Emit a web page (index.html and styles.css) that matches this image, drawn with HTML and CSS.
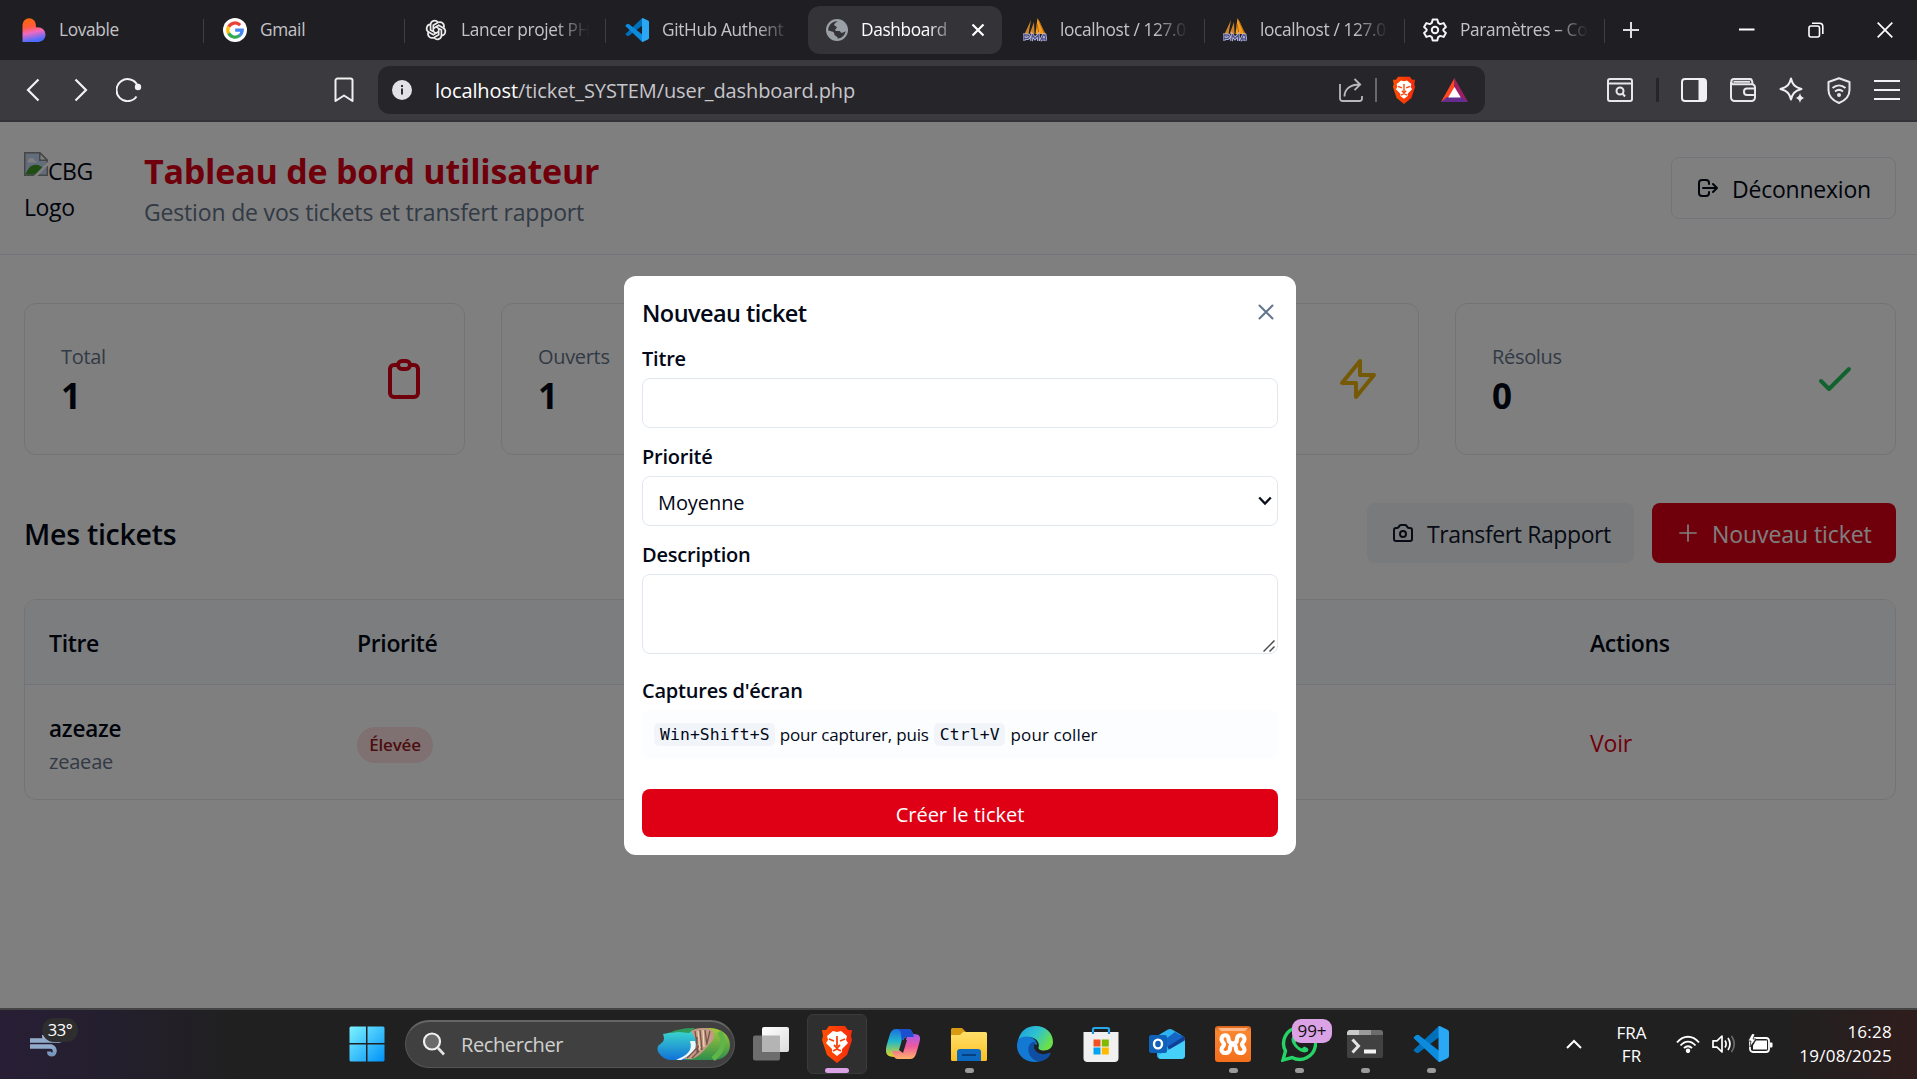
FILE: index.html
```html
<!DOCTYPE html>
<html lang="fr">
<head>
<meta charset="utf-8">
<title>Dashboard</title>
<link rel="stylesheet" href="styles.css">
</head>
<body>
<svg width="0" height="0" class="defs" aria-hidden="true">
  <defs>
    <linearGradient id="lov" x1="0" y1="0" x2="0.2" y2="1"><stop offset="0" stop-color="#ff6a00"/><stop offset=".4" stop-color="#ff5a3c"/><stop offset=".65" stop-color="#f06ac0"/><stop offset="1" stop-color="#4b6cff"/></linearGradient>
    <linearGradient id="win" x1="0" y1="0" x2="1" y2="1"><stop offset="0" stop-color="#7df3ff"/><stop offset="1" stop-color="#0091f8"/></linearGradient>
    <linearGradient id="brv" x1="0" y1="0" x2="1" y2="0"><stop offset="0" stop-color="#ff5000"/><stop offset="1" stop-color="#f62a0c"/></linearGradient>
    <linearGradient id="cpa" x1="0" y1="0" x2="0" y2="1"><stop offset="0" stop-color="#1b6fe0"/><stop offset=".45" stop-color="#23b9c8"/><stop offset="1" stop-color="#e8d51e"/></linearGradient>
    <linearGradient id="cpb" x1="0" y1="0" x2="0" y2="1"><stop offset="0" stop-color="#a45cf0"/><stop offset=".5" stop-color="#ee5a9c"/><stop offset="1" stop-color="#ffb26b"/></linearGradient>
    <linearGradient id="fol" x1="0" y1="0" x2="0" y2="1"><stop offset="0" stop-color="#ffe06a"/><stop offset="1" stop-color="#fdbf22"/></linearGradient>
    <linearGradient id="edg" x1="0" y1="0" x2="1" y2=".5"><stop offset="0" stop-color="#1c9be0"/><stop offset=".55" stop-color="#2fc3cf"/><stop offset="1" stop-color="#6be04a"/></linearGradient>
    <linearGradient id="xmp" x1="0" y1="0" x2="0" y2="1"><stop offset="0" stop-color="#d8611a"/><stop offset=".15" stop-color="#fb8630"/><stop offset="1" stop-color="#f36f1c"/></linearGradient>
    <linearGradient id="tvw" x1="0" y1="0" x2="1" y2="1"><stop offset="0" stop-color="#fff"/><stop offset="1" stop-color="#dcdcdc"/></linearGradient>
    <linearGradient id="wnd" x1="0" y1="0" x2="0" y2="1"><stop offset="0" stop-color="#b4c8e2"/><stop offset="1" stop-color="#7696be"/></linearGradient>
    <linearGradient id="sea" x1="0" y1="0" x2="0" y2="1"><stop offset="0" stop-color="#3ad6cc"/><stop offset="1" stop-color="#1272d8"/></linearGradient>
    <linearGradient id="hil" x1="0" y1="0" x2="0" y2="1"><stop offset="0" stop-color="#a9c93a"/><stop offset="1" stop-color="#2f8f4c"/></linearGradient>
    <symbol id="brave" viewBox="0 0 32 38">
      <path d="M8 1h16l3 4 4 0-1 6 1 4-5 15-10 8L6 30 1 15l1-4-1-6h4z" fill="url(#brv)"/>
      <path d="M16 7l4-1 6 5-1 4 2 3-6 6 0 3-5 4-5-4 0-3-6-6 2-3-1-4 6-5z" fill="#fff"/>
      <path d="M8 14l5 2M24 14l-5 2M16 11v10M13 20l3 3 3-3M12 26l4-2 4 2" fill="none" stroke="#f8420a" stroke-width="1.8"/>
    </symbol>
    <symbol id="vscode" viewBox="0 0 36 36">
      <path d="M1 23.500L25 .8l2 .2v9.500L6 26.500q-1.500 1-3 0l-1.800-1.200q-1-.8-.2-1.800z" fill="#0070ba"/>
      <path d="M1 12.500q-.8-1 .2-1.800L3 9.300q1.500-1 3 0l21 16.200V35l-2 .2z" fill="#0d8bdc"/>
      <path d="M25.500 .3q.8-.5 1.800 0L34.500 3.800Q36 4.500 36 6v24q0 1.500-1.500 2.200l-7.200 3.500q-1 .5-1.800 0z" fill="#2aa7f5"/>
    </symbol>
    <symbol id="pma" viewBox="0 0 24 24">
      <path d="M8 2L1.500 16h4zM11 4L6.500 16h5z" fill="#c9832b"/>
      <path d="M14.500 0l-2 16h10z" fill="#f89c1c"/>
      <path d="M16 3l5 12M14 6l2 10" stroke="#b06a14" fill="none"/>
      <path d="M1 23v-6h3.500c2.500 0 2.300 3.500-.5 3.500H1.500M8.500 23l.8-6 2.700 3.500 3.200-3.500.3 6M17.500 23l2.700-6H22l1 6M18.500 21h4" fill="none" stroke="#c4c6e4" stroke-width="2.800"/>
      <path d="M1 23v-6h3.500c2.500 0 2.300 3.500-.5 3.500H1.500M8.500 23l.8-6 2.700 3.500 3.200-3.500.3 6M17.500 23l2.700-6H22l1 6M18.500 21h4" fill="none" stroke="#4a4d86" stroke-width="1.300"/>
    </symbol>
  </defs>
</svg>

<div class="tabs">
  <div class="tab"><svg width="24" height="24" viewBox="0 0 24 24"><path d="M.5 24V7a6.700 6.700 0 0 1 13.400 0v2.300c5.800-.8 9.600 2.800 9.600 7.300 0 4.400-3.200 7.400-7.500 7.400z" fill="url(#lov)"/></svg><span class="t">Lovable</span></div>
  <div class="tab"><svg width="24" height="24" viewBox="0 0 24 24"><circle cx="12" cy="12" r="12" fill="#fff"/><g fill="none" stroke-width="3.200"><path d="M17.200 7.200A7.200 7.200 0 0 0 5.700 8.700" stroke="#ea4335"/><path d="M5.700 8.500a7.200 7.200 0 0 0 0 7" stroke="#fbbc05"/><path d="M5.700 15.300a7.200 7.200 0 0 0 10.800 2.300" stroke="#34a853"/><path d="M12.200 12.200h7A7.200 7.200 0 0 1 16.300 17.700" stroke="#4285f4"/></g></svg><span class="t">Gmail</span></div>
  <div class="tab"><svg width="24" height="24" viewBox="0 0 24 24" fill="none" stroke="#ececec" stroke-width="1.700"><path id="p1" d="M9.300 13.600V7.300l4.600-2.700a4.100 4.100 0 0 1 5.700 5.300"/><use href="#p1" transform="rotate(60 12 12)"/><use href="#p1" transform="rotate(120 12 12)"/><use href="#p1" transform="rotate(180 12 12)"/><use href="#p1" transform="rotate(240 12 12)"/><use href="#p1" transform="rotate(300 12 12)"/></svg><span class="t fade">Lancer projet PH</span></div>
  <div class="tab nosep"><svg width="24" height="24"><use href="#vscode"/></svg><span class="t fade">GitHub Authent</span></div>
  <div class="tab active"><svg width="22" height="22" viewBox="0 0 22 22"><circle cx="11" cy="11" r="11" fill="#9aa0a6"/><path d="M11.500 2.200c-1.200 1.600-3.500 1.800-3.300 3.700.1 1.400 2.300.8 2.500 2.300.2 1.600-1.800 1.500-1.500 3 .2 1 2.300.7 4 .9 1.600.2 1.300 2.200 3 1.700 1.600-.4 2.300-.6 3.300-1.700-.3 4.200-3.700 7.300-8 7.600.6-1.500-.5-2.300-1.700-2.700-2-.7-1-2.800-2.500-3.900C5.800 12.200 4 12 2.200 11.500c-.2-5 4-9.600 9.300-9.300z" fill="#343338"/><path d="M12 2.500l4.500 2.200 2 3.300-2.800 1.500-2.500-1.300z" fill="#9aa0a6"/></svg><span class="t fade">Dashboard</span><svg class="x" width="14" height="14" viewBox="0 0 14 14"><path d="M1.500 1.500l11 11M12.500 1.500l-11 11" stroke="#fff" stroke-width="2.200"/></svg></div>
  <div class="tab"><svg width="24" height="24"><use href="#pma"/></svg><span class="t fade">localhost / 127.0</span></div>
  <div class="tab"><svg width="24" height="24"><use href="#pma"/></svg><span class="t fade">localhost / 127.0</span></div>
  <div class="tab"><svg width="24" height="24" viewBox="0 0 24 24" fill="none" stroke="#f4f4f6" stroke-width="2" stroke-linejoin="round"><path d="M9.700 1.500h4.600l.9 3.400 2 1.200 3.400-1L22.900 9l-2.500 2.400v1.200L22.900 15l-2.300 3.900-3.400-1-2 1.200-.9 3.400H9.700l-.9-3.400-2-1.200-3.400 1L1.100 15l2.500-2.400v-1.200L1.100 9l2.300-3.900 3.400 1 2-1.200z"/><circle cx="12" cy="12" r="3.200"/></svg><span class="t fade">Paramètres – Co</span></div>
  <svg class="plus" width="16" height="16" viewBox="0 0 16 16"><path d="M8 0v16M0 8h16" stroke="#dedee2" stroke-width="2"/></svg>
  <div class="winctl">
    <svg width="16" height="16" viewBox="0 0 16 16"><path d="M0 7.500h15.500" stroke="#fff" stroke-width="2"/></svg>
    <svg width="16" height="16" viewBox="0 0 16 16" fill="none" stroke="#fff" stroke-width="1.600"><rect x="1" y="4" width="10.500" height="11" rx="2"/><path d="M4 1.200h7.500a3.300 3.300 0 0 1 3.300 3.300V12"/></svg>
    <svg width="16" height="16" viewBox="0 0 16 16"><path d="M.7.700l14.600 14.600M15.300.7L.7 15.300" stroke="#fff" stroke-width="1.700"/></svg>
  </div>
</div>

<div class="toolbar">
  <div class="nav">
    <svg width="14" height="24" viewBox="0 0 14 24"><path d="M12.500 1.500L2 12l10.500 10.500" fill="none" stroke="#f2f2f4" stroke-width="2.200"/></svg>
    <svg width="14" height="24" viewBox="0 0 14 24"><path d="M1.500 1.500L12 12 1.500 22.500" fill="none" stroke="#f2f2f4" stroke-width="2.200"/></svg>
    <svg width="26" height="24" viewBox="0 0 26 24"><path d="M21.500 7.500A11 11 0 1 0 20.500 18.500" fill="none" stroke="#f2f2f4" stroke-width="2"/><circle cx="22" cy="9" r="3.200" fill="#f2f2f4"/></svg>
  </div>
  <svg class="bm" width="20" height="26" viewBox="0 0 20 26"><path d="M1.500 24V3.500a2 2 0 0 1 2-2h13a2 2 0 0 1 2 2V24L10 18.500z" fill="none" stroke="#f0f0f2" stroke-width="2" stroke-linejoin="round"/></svg>
  <div class="url">
    <svg width="20" height="20" viewBox="0 0 20 20"><circle cx="10" cy="10" r="10" fill="#e1e1e6"/><path d="M10 8.500v6M10 5v2" stroke="#26252a" stroke-width="1.900"/></svg>
    <span class="addr"><b>localhost</b>/ticket_SYSTEM/user_dashboard.php</span>
    <svg class="share" width="24" height="24" viewBox="0 0 24 24" fill="none" stroke="#b8b8be" stroke-width="1.800"><path d="M1 6v14.500A2.500 2.500 0 0 0 3.500 23h17a2.500 2.500 0 0 0 2.500-2.500V18"/><path d="M5.500 18.500C5.500 11 11 6.500 21 6.500M15.500 1l5.700 5.500-5.700 5.700"/></svg>
    <i></i>
    <svg class="bv" width="24" height="28"><use href="#brave"/></svg>
    <svg width="27" height="24" viewBox="0 0 27 24"><path d="M13.500 0L0 24l13.500-8z" fill="#ff4724"/><path d="M13.500 0L27 24l-13.500-8z" fill="#9e1f63"/><path d="M0 24h27l-6-5H6z" fill="#662d91"/><path d="M13.500 9l6.300 10.500H7.200z" fill="#fff"/></svg>
  </div>
  <div class="tools">
    <svg width="26" height="24" viewBox="0 0 26 24" fill="none" stroke="#e8e8ec" stroke-width="2"><rect x="1" y="1" width="24" height="22" rx="2"/><path d="M1 5.500h24"/><circle cx="13" cy="13" r="3.500"/><path d="M15.500 15.500l2.500 3"/></svg>
    <i></i>
    <svg width="26" height="24" viewBox="0 0 26 24"><rect x="1" y="1" width="24" height="22" rx="3" fill="none" stroke="#f0f0f3" stroke-width="2"/><path d="M17.500 1H23a2 2 0 0 1 2 2v18a2 2 0 0 1-2 2h-5.500z" fill="#f0f0f3"/></svg>
    <svg width="26" height="24" viewBox="0 0 26 24" fill="none" stroke="#e8e8ec" stroke-width="2"><path d="M1 4v15.500A3.500 3.500 0 0 0 4.500 23h17a3.500 3.500 0 0 0 3.500-3.500V9.300a3 3 0 0 0-3-3H4A2.600 2.600 0 0 1 4 1h16.500q2 1 2 5.300M25 10.500h-8a3 3 0 0 0-3 3v.5a3 3 0 0 0 3 3h8M3.500 3.700H20"/></svg>
    <svg width="26" height="26" viewBox="0 0 26 26"><path d="M12 1.500c1.500 6 3.500 8.500 10.500 10.500-7 2-9 4.500-10.500 10.500C10.500 16.500 8.500 14 1.500 12 8.500 10 10.500 7.500 12 1.500z" fill="none" stroke="#f0f0f3" stroke-width="2" stroke-linejoin="round"/><path d="M21 16c.8 3.200 1.600 4 4.500 5-2.900.9-3.700 1.800-4.500 5-.8-3.200-1.600-4.100-4.500-5 2.900-1 3.700-1.800 4.500-5z" fill="#f0f0f3"/></svg>
    <svg width="24" height="27" viewBox="0 0 24 27" fill="none" stroke="#e8e8ec" stroke-width="2"><path d="M12 1.200L22.500 5v8c0 6-4 10.500-10.500 13C5.500 23.500 1.500 19 1.500 13V5z" stroke-linejoin="round"/><path d="M5.500 11c4-3.500 9-3.500 13 0M8 14.500c2.500-2 5.500-2 8 0"/><circle cx="12" cy="18" r="1" fill="#e8e8ec"/></svg>
    <svg width="26" height="22" viewBox="0 0 26 22"><path d="M0 2h26M0 11h26M0 20h26" stroke="#f2f2f4" stroke-width="2"/></svg>
  </div>
</div>

<div class="page">
  <header>
    <div class="logo"><svg width="24" height="24" viewBox="0 0 16 16"><path d="M.5.500h10l5 5v10H.5z" fill="#c4d8f6" stroke="#8d8d8d"/><path d="M10.500.500v5h5z" fill="#fff" stroke="#8d8d8d"/><path d="M2.500 6.500c0-1.600 1.200-2.500 2.500-2.500s2 .9 2 1.800c1.200 0 1.500.7 1.500 1.200h-6z" fill="#fff"/><path d="M1 15c1.500-4.500 4-6.500 7-6.500 2 0 3.500 1 4.500 2L8 15z" fill="#3f9b26"/><path d="M16 6.500V9L9 16H6.500z" fill="#fff"/></svg><span>CBG</span><span class="l2">Logo</span></div>
    <div class="heads"><h1>Tableau de bord utilisateur</h1><p>Gestion de vos tickets et transfert rapport</p></div>
    <button class="btn out"><svg class="ic" viewBox="0 0 24 24"><path d="M17 16l4-4m0 0l-4-4m4 4H7m6 4v1a3 3 0 01-3 3H6a3 3 0 01-3-3V7a3 3 0 013-3h4a3 3 0 013 3v1"/></svg><span>Déconnexion</span></button>
  </header>
  <main>
    <section class="cards">
      <div class="card"><div><p>Total</p><b>1</b></div><svg class="big red" viewBox="0 0 24 24"><path d="M9 5H7a2 2 0 00-2 2v12a2 2 0 002 2h10a2 2 0 002-2V7a2 2 0 00-2-2h-2M9 5a2 2 0 002 2h2a2 2 0 002-2M9 5a2 2 0 012-2h2a2 2 0 012 2"/></svg></div>
      <div class="card"><div><p>Ouverts</p><b>1</b></div></div>
      <div class="card"><svg class="big yellow" viewBox="0 0 24 24"><path d="M13 10V3L4 14h7v7l9-11h-7z"/></svg></div>
      <div class="card"><div><p>Résolus</p><b>0</b></div><svg class="big green" viewBox="0 0 24 24"><path d="M5 13l4 4L19 7"/></svg></div>
    </section>
    <div class="bar">
      <h2>Mes tickets</h2>
      <button class="btn sec"><svg class="ic" viewBox="0 0 24 24"><path d="M3 9a2 2 0 012-2h.93a2 2 0 001.664-.89l.812-1.220A2 2 0 0110.070 4h3.860a2 2 0 011.664.89l.812 1.220A2 2 0 0018.070 7H19a2 2 0 012 2v9a2 2 0 01-2 2H5a2 2 0 01-2-2V9z"/><path d="M15 13a3 3 0 11-6 0 3 3 0 016 0z"/></svg><span>Transfert Rapport</span></button>
      <button class="btn pri"><svg class="ic thin" viewBox="0 0 24 24"><path d="M12 4v16m8-8H4"/></svg><span>Nouveau ticket</span></button>
    </div>
    <div class="table">
      <div class="row th"><span>Titre</span><span>Priorité</span><span>Actions</span></div>
      <div class="row td"><div><strong>azeaze</strong><small>zeaeae</small></div><div><em>Élevée</em></div><a>Voir</a></div>
    </div>
  </main>
  <div class="overlay">
    <form class="modal">
      <div class="mh"><h3>Nouveau ticket</h3><svg width="24" height="24" viewBox="0 0 24 24"><path d="M5.500 5.500l13 13M18.500 5.500l-13 13" stroke="#64748b" stroke-width="2" stroke-linecap="round"/></svg></div>
      <label class="l-titre">Titre</label>
      <div class="field"></div>
      <label>Priorité</label>
      <div class="field sel"><span>Moyenne</span><svg width="14" height="10" viewBox="0 0 14 10"><path d="M1.200 1.500L7 7.500l5.800-6" fill="none" stroke="#0a0f1c" stroke-width="2.300"/></svg></div>
      <label>Description</label>
      <div class="field area"><svg width="12" height="12" viewBox="0 0 12 12"><path d="M.5 11.500l11-11M6.500 11.500l5-5" stroke="#4c4c4c" stroke-width="1.500"/></svg></div>
      <label class="l-cap">Captures d'écran</label>
      <div class="hint"><kbd>Win+Shift+S</kbd><span>pour capturer, puis</span><kbd>Ctrl+V</kbd><span class="last">pour coller</span></div>
      <button class="submit" type="button"><span>Créer le ticket</span></button>
    </form>
  </div>
</div>

<div class="taskbar">
  <div class="weather"><svg width="36" height="30" viewBox="0 0 36 30"><g fill="none" stroke="url(#wnd)" stroke-width="4"><path d="M0 13.500h29c5 0 5-7 1-8M0 19.500h20c6 0 6 8 2 8-2 0-3-1-3-3M14 8c0 4 1 5 4 5.500"/></g><path d="M0 11.500h30v4H0zM0 17.500h22v4H0z" fill="#93abcb"/></svg><span>33°</span></div>
  <svg class="start" width="36" height="36" viewBox="0 0 36 36"><path d="M2 .5h15V17H.5V2A1.500 1.500 0 0 1 2 .5zM18.500.5H34A1.500 1.500 0 0 1 35.500 2v15h-17zM.5 18.500H17v17H2A1.500 1.500 0 0 1 .5 34zM18.500 18.500h17V34a1.500 1.500 0 0 1-1.500 1.500H18.500z" fill="url(#win)"/></svg>
  <div class="search"><svg width="24" height="24" viewBox="0 0 24 24"><circle cx="10" cy="9.500" r="8" fill="#6a6a6a" stroke="#f0f0f0" stroke-width="2.200"/><path d="M16 16l6 6.500" stroke="#e4e4e4" stroke-width="2.600"/></svg><span>Rechercher</span>
    <svg class="pic" width="74" height="34" viewBox="0 0 74 34"><path d="M44 2C60-2 73 6 73 18c0 9-7 15-17 15H28z" fill="url(#hil)"/><path d="M62 5c7 8 5 18-6 27" fill="none" stroke="#5fb548" stroke-width="5"/><path d="M6 7c8-1 12-3 20-3h14v14L28 33H12C2 30-2 22 2 18c5-4 6-5 4-11z" fill="url(#sea)"/><path d="M12 6c6-3 14-5 26-5l-6 5-10-1z" fill="#2f9a5a"/><path d="M38 14c3 8-3 14-14 19h-5c12-5 17-10 14-19z" fill="#eefaff"/><path d="M34 4c4-3 12-4 20-2 6 7 2 12-3 17-5 6-11 12-17 13h-8c12-6 15-12 12-21z" fill="#c39a83"/><path d="M38 4l3 22M43 3l2 20M48 3l2 15M53 4l-3 12M30 31l13-13M35 31l10-10M40 10v16" stroke="#5e3c40" stroke-width="1.300" opacity=".75"/><path d="M41 4l2 20M46 3l1 17" stroke="#f0d8b4" stroke-width="1.200"/></svg>
  </div>
  <div class="apps">
    <div class="app"><svg width="36" height="36" viewBox="0 0 36 36"><rect y="9.500" width="27" height="25" rx="2" fill="#6d6d6d"/><rect x="9" y="1" width="27" height="25" rx="2" fill="url(#tvw)"/><path d="M9 9.500h18V26H9z" fill="#b4b4b4"/></svg></div>
    <div class="app on"><svg width="32" height="38"><use href="#brave"/></svg></div>
    <div class="app"><svg width="34" height="32" viewBox="0 0 34 32"><path d="M10 1h12c3 0 4 2 5 5l1 3h-6c-3 0-4 1-5 4l-4 13c-1 3-3 3-5 3-9 0-9-6-7-13l3-10c1-3 3-5 6-5z" fill="url(#cpa)"/><path d="M24 31H12c-3 0-4-2-5-5l-1-3h6c3 0 4-1 5-4l4-10c1-3 3-3 5-3 9 0 9 3 7 10l-3 10c-1 3-3 5-6 5z" fill="url(#cpb)"/><path d="M12 1h10c3 0 4 2 5 5l1 3h-6c-3 0-4 0-5 3l-1 3-1-8c0-3-1-5-3-6z" fill="#1c4ed0"/><path d="M13 22l3-10h5l-4 13z" fill="#26232b"/></svg></div>
    <div class="app dot"><svg width="36" height="34" viewBox="0 0 36 34"><path d="M0 2.500A1.500 1.500 0 0 1 1.500 1H11l4 4v4H0z" fill="#d79a12"/><path d="M12 5h22.500A1.500 1.500 0 0 1 36 6.500v26a1.500 1.500 0 0 1-1.500 1.500h-33A1.500 1.500 0 0 1 0 32.500V8h9z" fill="url(#fol)"/><path d="M6 34V25a3 3 0 0 1 3-3h18a3 3 0 0 1 3 3v9z" fill="#0d68bf"/><path d="M11 28h14" stroke="#083f80" stroke-width="2"/></svg></div>
    <div class="app"><svg width="36" height="36" viewBox="0 0 36 36"><path d="M1 15C3 5 10 0 18.500 0 29 0 36 7 36 16c0 5-4 8.500-9 8.500-4 0-6-1.500-5.500-3C23 19 21 12 13 11 7 10.500 2.500 13 1 15z" fill="url(#edg)"/><path d="M1 14c3-3.500 8-4 12-3 5 1.500 7 5 7 8-3-2-8-1-8 5 0 6 5 11 11 11.500C11 38-1 31 0 18z" fill="#1479d2"/><path d="M14 17c-5 4-3 17 9 18.500 5-1 9-4 10.500-7.500.5-1-.5-1.500-1.300-1C25 30 17 27 17 20c0-2 1-3 2-4-2-.5-3.500 0-5 1z" fill="#0f4fa3"/></svg></div>
    <div class="app"><svg width="36" height="36" viewBox="0 0 36 36"><path d="M10 8V3.500A1.500 1.500 0 0 1 11.500 2h13A1.500 1.500 0 0 1 26 3.500V8" fill="none" stroke="#28a8ea" stroke-width="2.200"/><path d="M.5 6h35v26a4 4 0 0 1-4 4h-27a4 4 0 0 1-4-4z" fill="#f0f0f0"/><path d="M10 6v2M26 6v2" stroke="#1f8ed6" stroke-width="2.200"/><path d="M10.500 13.500h7v7h-7z" fill="#f25022"/><path d="M18.800 13.500h7v7h-7z" fill="#7fba00"/><path d="M10.500 21.500h7v7h-7z" fill="#00a4ef"/><path d="M18.800 21.500h7v7h-7z" fill="#ffb900"/></svg></div>
    <div class="app"><svg width="36" height="32" viewBox="0 0 36 32"><path d="M8 8L19 1.500q2-1 4 0L34 8q2 1.300 2 4v15q0 4-4 4H12q-4 0-4-4z" fill="#2cb4f2"/><path d="M34 8q2 1.500 2 4L20 22l-3-7L32 7z" fill="#123f94"/><path d="M26 4l8 5-16 10-4-6z" fill="#1565c6"/><path d="M10 27l26-14v14q0 4-4 4H12q-3-1-2-4z" fill="#45d0fa"/><rect y="7" width="18" height="18" rx="2" fill="#0f62b8"/><ellipse cx="9" cy="16" rx="4" ry="4.400" fill="none" stroke="#fff" stroke-width="2.400"/></svg></div>
    <div class="app dot"><svg width="36" height="36" viewBox="0 0 36 36"><rect width="36" height="36" rx="3" fill="url(#xmp)"/><path d="M3 2h30l-3 3H6z" fill="#ffb98a"/><path d="M13.500 13C13.500 7.500 6.500 8.500 6.500 13c0 3 2.500 3.500 2.500 5.500S6.500 21 6.500 23.500c0 5 8.500 4.500 8.500-.5 0-3 1-4.500 3-4.500s3 1.500 3 4.500c0 5 8.500 5.500 8.500.5 0-2.500-2.500-3-2.500-5s2.500-2.500 2.500-5.500c0-4.500-7.500-5.500-7.500 0 0 2.500-1 4.500-4 4.500-2.500 0-4.500-2-4.500-4.500z" fill="none" stroke="#fff" stroke-width="4.200" stroke-linejoin="round"/></svg></div>
    <div class="app dot wa"><svg width="36" height="36" viewBox="0 0 36 36"><path d="M2 34l2.500-9A16 16 0 1 1 11 31.500z" fill="none" stroke="#25d366" stroke-width="3.400"/><path d="M12 10c-3 3-1 8 3 12 4 4 9 6 12 3 1-2 0-3-4-4.500l-2 2c-3-1-5-3-6.500-6l1.500-2c-1-4-2-5.500-4-4.500z" fill="#25d366"/></svg><span>99+</span></div>
    <div class="app dot"><svg width="36" height="28" viewBox="0 0 36 28"><rect width="36" height="28" rx="2" fill="#414141"/><path d="M2 0h10v5H0V2z" fill="#c9c9c9"/><path d="M12 0h12v5H12z" fill="#9a9a9a"/><path d="M24 0h10l2 2v3H24z" fill="#6c6c6c"/><path d="M5.500 9.500l6 6.500-6 6.500" fill="none" stroke="#e4e4e4" stroke-width="3"/><path d="M17 19.500h12v4H17z" fill="#f4f4f4"/></svg></div>
    <div class="app dot"><svg width="36" height="36"><use href="#vscode"/></svg></div>
  </div>
  <div class="tray">
    <svg class="up" width="16" height="10" viewBox="0 0 16 10"><path d="M1 9l7-7 7 7" fill="none" stroke="#fff" stroke-width="2"/></svg>
    <div class="lang"><span>FRA</span><span>FR</span></div>
    <svg class="wifi" width="24" height="18" viewBox="0 0 24 18" fill="none" stroke="#fff" stroke-width="1.900"><path d="M1 7.500C7.500-.2 16.500-.2 23 7.500M4.500 10.500c4.500-5.200 10.500-5.200 15 0M8 13.200c2.500-2.700 5.500-2.700 8 0"/><circle cx="12" cy="15.800" r="1.300" fill="#fff"/></svg>
    <svg class="vol" width="24" height="20" viewBox="0 0 24 20" fill="none" stroke="#fff" stroke-width="1.700"><path d="M1 6.800v6.400h4L10 18V2L5 6.800z" stroke-linejoin="round"/><path d="M13 6.500q2.200 3.500 0 7M16 4q4 6 0 12"/><path d="M19.500 2q5.500 8 0 16" stroke="#6a6a6a"/></svg>
    <svg class="bat" width="26" height="20" viewBox="0 0 26 20"><rect x="2" y="4" width="19" height="14" rx="3" fill="none" stroke="#fff" stroke-width="1.800"/><path d="M8 6.500h11v9H5v-4z" fill="#fff"/><path d="M22 8.500h1.500q1 0 1 1v3q0 1-1 1H22z" fill="#fff"/><path d="M4-.5L0 7h3l-1 6 6-8H5l2-5z" fill="#fff" stroke="#202020" stroke-width=".8"/></svg>
    <div class="clock"><span>16:28</span><span>19/08/2025</span></div>
  </div>
</div>
</body>
</html>
```
FILE: styles.css
```css
* { box-sizing: border-box; }
body {
  margin: 0;
  width: 1917px;
  height: 1079px;
  overflow: hidden;
  display: flex;
  flex-direction: column;
  font-family: "Open Sans", "Noto Sans", sans-serif;
  color: #020817;
}
h1, h2, h3, p { margin: 0; }
svg { flex: none; display: block; }
span, b, strong, small, label, h1, h2, h3, p { white-space: nowrap; }
.defs { position: absolute; }

/* tab strip */
.tabs { height: 60px; background: #1f1e23; display: flex; align-items: center; padding-left: 4px; }
.tab { width: 200px; height: 48px; margin-right: 1px; padding: 0 14px 0 18px; display: flex; align-items: center; gap: 13px; color: #c4c4c8; font-size: 17.3px; letter-spacing: -0.35px; position: relative; }
.tab::after { content: ""; position: absolute; right: 0; top: 13px; width: 1px; height: 24px; background: #3f3e44; }
.tab .t { line-height: 24px; }
.tab .fade { flex: 1; width: 0; -webkit-mask-image: linear-gradient(90deg, #000 72%, transparent 98%); mask-image: linear-gradient(90deg, #000 72%, transparent 98%); }
.tab.nosep::after, .tab.active::after { display: none; }
.tab.active { width: 194px; margin-right: 3px; background: #343338; border-radius: 12px; color: #fff; padding-right: 17px; }
.tab.active .fade { -webkit-mask-image: linear-gradient(90deg, #000 75%, rgba(0, 0, 0, 0.3)); mask-image: linear-gradient(90deg, #000 75%, rgba(0, 0, 0, 0.3)); }
.tab.active .x { margin-left: 9px; }
.tab:nth-child(n+6) { margin-right: 0; }
.plus { margin-left: 18px; }
.winctl { margin-left: auto; margin-right: 24px; display: flex; gap: 53px; }

/* toolbar */
.toolbar { height: 62px; background: #3b3a3f; border-bottom: 2px solid #333238; display: flex; align-items: center; }
.nav { display: flex; align-items: center; gap: 34px; margin-left: 26px; }
.nav svg:last-child { margin-left: -6px; }
.bm { margin-left: 192px; }
.url { margin-left: 24px; width: 1107px; height: 48px; border-radius: 12px; background: #26252a; display: flex; align-items: center; padding: 0 17px 0 14px; }
.addr { margin-left: 23px; font-size: 20px; letter-spacing: -0.09px; color: #c6c6cb; flex: 1; }
.addr b { font-weight: 400; color: #fff; }
.url i { width: 2px; height: 24px; background: #68676d; margin: 0 15px 0 12px; }
.bv { margin-right: 25px; }
.tools { flex: 1; display: flex; align-items: center; justify-content: space-between; margin: 0 17px 0 122px; }
.tools i { width: 3px; height: 24px; background: #26252a; }

/* dashboard */
.page { height: 886px; position: relative; background: #fff; }
header { height: 133px; border-bottom: 1px solid #e2e8f0; padding: 0 21px 0 24px; display: flex; align-items: center; }
.logo { width: 72px; height: 96px; margin-right: 48px; display: flex; flex-wrap: wrap; font-size: 23px; line-height: 36px; letter-spacing: -0.4px; padding-top: 12px; align-content: flex-start; }
.logo span { height: 36px; margin-top: 1px; }
.logo .l2 { width: 72px; margin-top: 0; }
.heads { flex: 1; padding-top: 6px; }
h1 { font-size: 34px; line-height: 40px; font-weight: 700; color: #df0016; letter-spacing: -0.21px; }
.heads p { margin-top: 2px; font-size: 23px; line-height: 38px; color: #64748b; letter-spacing: -0.17px; }
.btn { font: inherit; color: inherit; height: 60px; border: 0; border-radius: 8px; display: flex; align-items: center; font-size: 23px; letter-spacing: -0.4px; padding: 0 24px; }
.btn span { margin: 2px 0 0 12px; }
.ic, .big { width: 24px; height: 24px; fill: none; stroke: currentColor; stroke-width: 2; stroke-linecap: round; stroke-linejoin: round; }
.ic.thin { stroke-width: 1.7; }
.out { width: 225px; height: 62px; background: #fff; border: 1px solid #e2e8f0; letter-spacing: -0.22px; }
main { padding: 48px 21px 0 24px; }
.cards { display: grid; grid-template-columns: repeat(4, 441px); justify-content: space-between; }
.card { height: 152px; border: 1px solid #e5e7eb; border-radius: 12px; padding: 0 36px; display: flex; align-items: center; }
.card p { font-size: 20px; line-height: 30px; padding-top: 3px; color: #64748b; letter-spacing: -0.32px; }
.card b { display: block; font-size: 35px; line-height: 47px; }
.big { width: 48px; height: 48px; margin-left: auto; }
.red { color: #df0016; }
.yellow { color: #eab308; }
.green { color: #22c55e; }
.bar { display: flex; align-items: center; margin-top: 48px; height: 60px; }
h2 { flex: 1; font-size: 28.500px; font-weight: 600; letter-spacing: -0.26px; padding-top: 2px; }
.sec { width: 267px; background: #f1f5f9; margin-right: 18px; color: #0f172a; }
.pri { width: 244px; background: #df0016; color: #fff; letter-spacing: -0.08px; }
.table { margin-top: 36px; height: 201px; border: 1px solid #e5e7eb; border-radius: 12px; overflow: hidden; }
.row { display: grid; grid-template-columns: 308px 1233px 1fr; align-items: center; padding-left: 24px; }
.th { height: 85px; background: #f8fafc; border-bottom: 1px solid #e2e8f0; font-size: 23px; font-weight: 600; letter-spacing: -0.35px; padding-top: 2px; }
.td { height: 116px; font-size: 23px; letter-spacing: -0.2px; }
.td strong { display: block; font-weight: 600; font-size: 22.500px; line-height: 36px; padding-top: 2px; }
.td small { display: block; font-size: 20px; line-height: 30px; color: #64748b; }
.td em { display: block; width: 76px; margin-top: 3px; font-style: normal; font-size: 17px; font-weight: 600; line-height: 36px; height: 36px; text-align: center; border-radius: 18px; background: #fee2e2; color: #991b1b; }
.td a { color: #df0016; }

/* dialog */
.overlay { position: absolute; inset: 0; background: rgba(0, 0, 0, 0.5); display: flex; align-items: flex-start; padding: 154px 0 0 624px; }
.modal { width: 672px; height: 579px; background: #fff; border-radius: 12px; padding: 18px; display: flex; flex-direction: column; }
.mh { display: flex; justify-content: space-between; height: 38px; }
.mh h3 { font-size: 23.500px; font-weight: 600; line-height: 38px; letter-spacing: -0.55px; }
.mh svg { margin-top: 6px; }
.modal label { display: block; font-size: 20px; font-weight: 600; line-height: 30px; height: 48px; padding-top: 14px; letter-spacing: -0.22px; }
.modal .l-titre { height: 46px; padding-top: 12px; }
.modal .l-cap { height: 56px; padding-top: 22px; }
.field { height: 50px; flex: none; border: 1px solid #e2e8f0; border-radius: 8px; }
.sel { display: flex; align-items: center; justify-content: space-between; padding: 0 5px 0 15px; font-size: 20px; letter-spacing: -0.08px; }
.sel span { margin-top: 2px; }
.area { height: 80px; display: flex; align-items: flex-end; justify-content: flex-end; padding: 0 2px 1px 0; }
.hint { height: 49px; flex: none; border-radius: 8px; background: #fbfdff; display: flex; align-items: center; padding-left: 12px; font-size: 17px; letter-spacing: -0.17px; }
.hint kbd { font: 16.400px "DejaVu Sans Mono", monospace; letter-spacing: 0.1px; background: #f1f5f9; border-radius: 5px; height: 23px; line-height: 23px; padding: 0 5px 0 6px; }
.hint span { margin: 0 5px; }
.hint .last { letter-spacing: 0.1px; margin-left: 6px; }
.submit { margin-top: 30px; height: 48px; border: 0; border-radius: 8px; background: #df0016; color: #fff; font: 500 20px "Open Sans", sans-serif; padding-top: 3px; }

/* taskbar */
.taskbar { height: 71px; border-top: 2px solid #444; background: linear-gradient(90deg, #281e35 0, #241f2e 100px, #202020 240px, #202020 1780px, #301d1d 1917px); display: flex; align-items: center; color: #fff; padding-bottom: 2px; }
.weather { width: 44px; margin-left: 30px; position: relative; height: 36px; padding-top: 1px; }
.weather span { position: absolute; left: 12px; top: -8px; width: 36px; height: 24px; border-radius: 12px; background: #2e2e2e; font-size: 16.500px; line-height: 24px; text-align: center; letter-spacing: -0.4px; }
.start { margin-left: 275px; }
.search { margin-left: 20px; width: 330px; height: 48px; border-radius: 24px; background: #404040; border: 1px solid #555; border-top: 2px solid #656565; display: flex; align-items: center; padding: 0 3px 0 16px; font-size: 20px; color: #d0d0d0; letter-spacing: -0.4px; }
.search span { flex: 1; margin-left: 15px; }
.apps { display: flex; margin-left: 6px; }
.app { width: 60px; height: 60px; margin: 0 6px 0 0; display: flex; align-items: center; justify-content: center; position: relative; border-radius: 6px; }
.app.on { background: #2f2f2f; border: 1px solid #3a3a3a; }
.app.dot::after, .app.on::after { content: ""; position: absolute; bottom: 1px; width: 9px; height: 5px; border-radius: 3px; background: #9b9b9b; }
.app.on::after { width: 24px; background: #dba2e6; bottom: 0; }
.wa span { position: absolute; left: 23px; top: 5px; width: 40px; height: 24px; border-radius: 9px; background: #dba2e6; color: #111; font-size: 17px; line-height: 24px; text-align: center; }
.tray { margin-left: auto; margin-right: 25px; display: flex; align-items: center; font-size: 17px; line-height: 24px; }
.lang { margin: 0 28px 0 33px; display: flex; flex-direction: column; align-items: center; line-height: 23px; width: 33px; }
.vol { margin: 0 12px; }
.clock { margin-left: 22px; width: 96px; display: flex; flex-direction: column; align-items: flex-end; letter-spacing: 0.25px; }
```
